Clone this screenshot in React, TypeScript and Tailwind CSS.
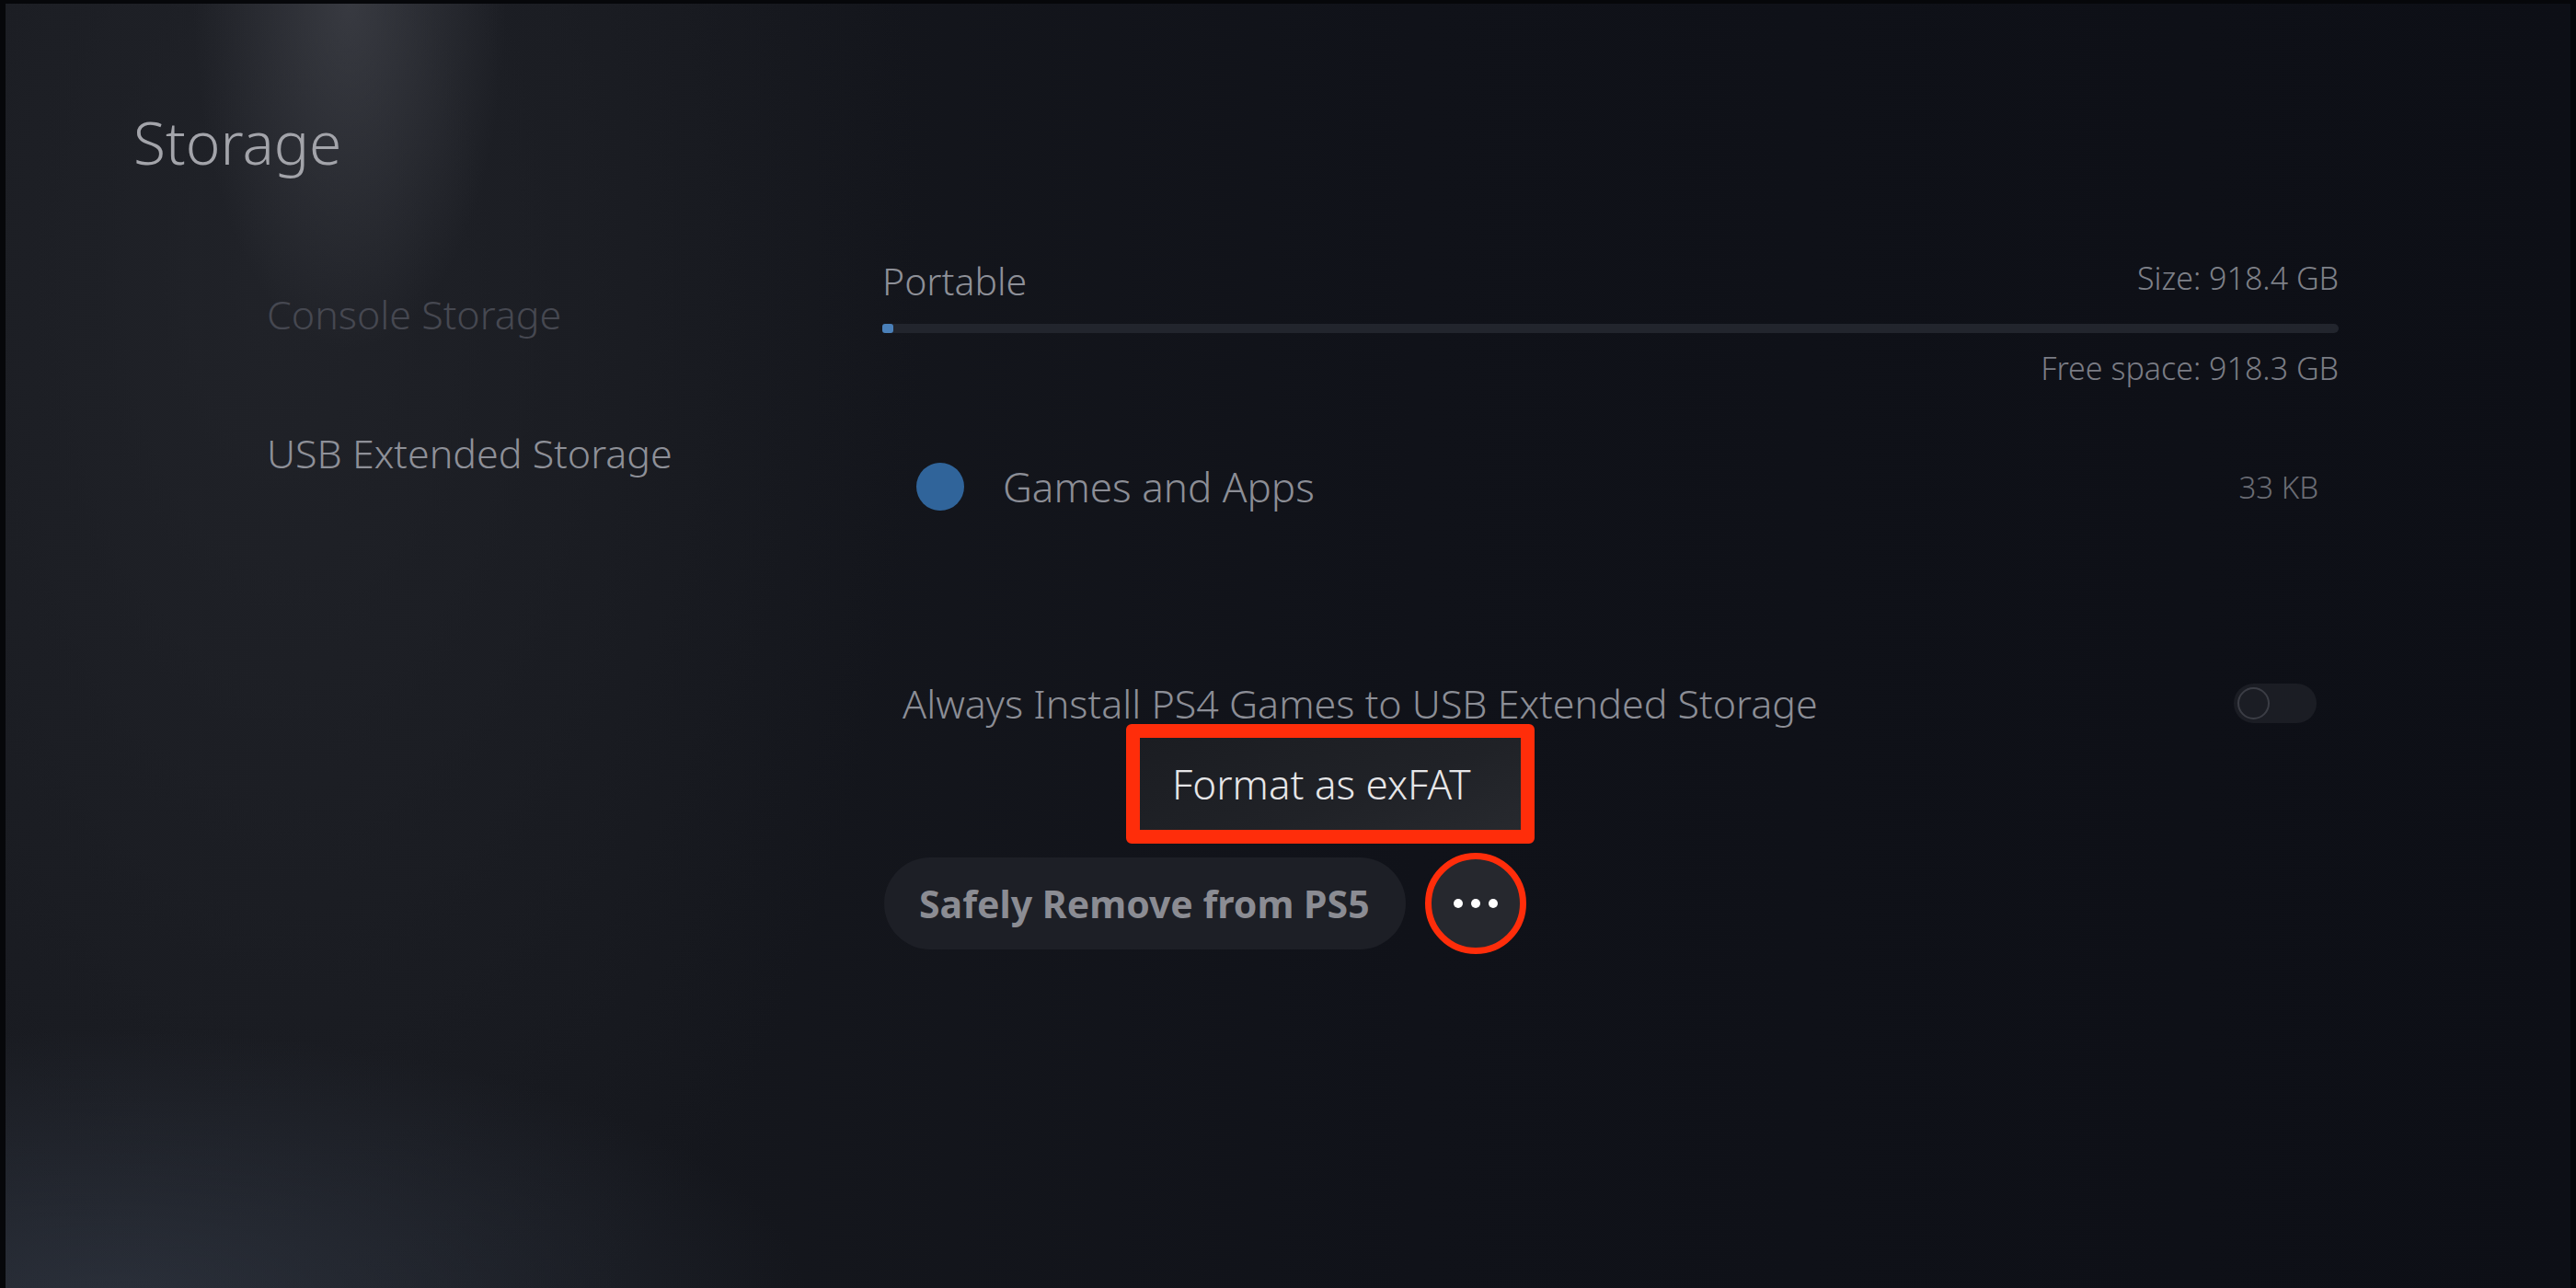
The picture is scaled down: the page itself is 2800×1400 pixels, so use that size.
import React from "react";

export default function App() {
  return (
    <div className="relative w-[2800px] h-[1400px] overflow-hidden flex flex-col font-['Noto_Sans',sans-serif] bg-[radial-gradient(ellipse_170px_380px_at_380px_0px,rgba(88,90,98,0.45),transparent),radial-gradient(ellipse_760px_300px_at_120px_1420px,rgba(58,66,80,0.55),transparent),radial-gradient(ellipse_700px_1300px_at_300px_300px,rgba(36,38,44,0.75),transparent),linear-gradient(90deg,#17191f_0%,#15171d_25%,#101219_55%,#0d0f16_100%)]">
      <div className="absolute inset-0 border-t-[4px] border-x-[6px] border-[#06070a] pointer-events-none" />

      <div className="pl-[145px] pt-[123px]">
        <h1 className="text-[64px] leading-none font-light text-[#a3a4aa]">Storage</h1>
      </div>

      <div className="flex mt-[98px] pl-[290px]">
        {/* Sidebar */}
        <div className="w-[669px] flex flex-col pt-[35px] gap-[108px]">
          <div className="text-[43px] leading-none font-light text-[#464851]">Console Storage</div>
          <div className="text-[43px] leading-none font-light text-[#8e9098]">USB Extended Storage</div>
        </div>

        {/* Right column */}
        <div className="w-[1583px] flex flex-col">
          <div className="flex justify-between items-start">
            <div className="text-[41px] leading-none font-light text-[#8e9098]">Portable</div>
            <div className="text-[34px] leading-none font-light text-[#7e8088]">Size: 918.4 GB</div>
          </div>
          <div className="mt-[26px] h-[10px] rounded-full bg-[#22252d] flex">
            <div className="w-[12px] h-[10px] rounded-[3px] bg-[#4a80b9]" />
          </div>
          <div className="mt-[21px] text-right text-[34px] leading-none font-light text-[#7a7c84]">
            Free space: 918.3 GB
          </div>

          <div className="mt-[86px] h-[52px] flex items-center pl-[37px] pr-[22px]">
            <div className="w-[52px] h-[52px] rounded-full bg-[#30649a]" />
            <div className="ml-[42px] flex-1 text-[44px] leading-none font-light text-[#8c8e96]">Games and Apps</div>
            <div className="text-[33px] leading-none font-light text-[#6a6c74]">33 KB</div>
          </div>

          <div className="mt-[187px] h-[44px] flex items-center justify-between pl-[22px] pr-[24px]">
            <div className="text-[43px] leading-none font-light text-[#8c8e96]">
              Always Install PS4 Games to USB Extended Storage
            </div>
            <div className="w-[90px] h-[43px] rounded-full bg-[#1b1d24] flex items-center pl-[4px]">
              <div className="w-[35px] h-[35px] rounded-full border-[2px] border-[#3b3d45]" />
            </div>
          </div>

          <div className="relative mt-[141px] h-[110px] flex items-center gap-[21px] pl-[2px]">
            <div className="w-[567px] h-[100px] rounded-full bg-[#1d1f26] flex items-center pl-[38px]">
              <span className="text-[41px] leading-none font-bold text-[#8b8c93]">Safely Remove from PS5</span>
            </div>
            <div className="w-[110px] h-[110px] rounded-full border-[7px] border-[#ff2d0a] bg-[#26282e] flex items-center justify-center gap-[9px]">
              <span className="w-[10px] h-[10px] rounded-full bg-white" />
              <span className="w-[10px] h-[10px] rounded-full bg-white" />
              <span className="w-[10px] h-[10px] rounded-full bg-white" />
            </div>

            <div className="absolute left-[265px] top-[-140px] w-[444px] h-[130px] rounded-[6px] border-[15px] border-[#ff2d0a] bg-[linear-gradient(160deg,#1b1d22_0%,#202227_60%,#27292e_100%)] flex items-center pl-[35px]">
              <span className="text-[44px] leading-none text-[#e6e6e8] font-light">Format as exFAT</span>
            </div>
          </div>
        </div>
      </div>
    </div>
  );
}
